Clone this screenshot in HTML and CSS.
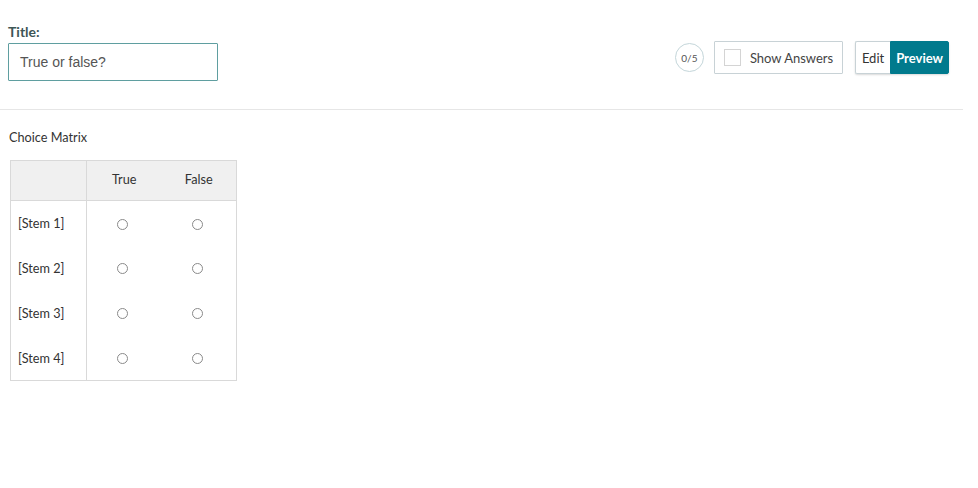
FILE: index.html
```html
<!DOCTYPE html>
<html lang="en">
<head>
    <meta charset="UTF-8">
    <title>Choice Matrix</title>
    <link rel="stylesheet" href="styles.css">
</head>
<body>
    <div class="header">
        <div class="title-block">
            <label class="title-label">Title:</label>
            <div class="title-input">True or false?</div>
        </div>
        <div class="controls">
            <div class="score">0/5</div>
            <div class="show-answers">
                <span class="checkbox"></span>
                <span>Show Answers</span>
            </div>
            <div class="mode-group">
                <span class="mode-btn">Edit</span>
                <span class="mode-btn active">Preview</span>
            </div>
        </div>
    </div>
    <div class="content">
        <div class="question-type">Choice Matrix</div>
        <table class="matrix">
            <thead>
                <tr>
                    <th class="stem-col"></th>
                    <th>True</th>
                    <th>False</th>
                </tr>
            </thead>
            <tbody>
                <tr><td class="stem">[Stem 1]</td><td><span class="radio"></span></td><td><span class="radio"></span></td></tr>
                <tr><td class="stem">[Stem 2]</td><td><span class="radio"></span></td><td><span class="radio"></span></td></tr>
                <tr><td class="stem">[Stem 3]</td><td><span class="radio"></span></td><td><span class="radio"></span></td></tr>
                <tr><td class="stem">[Stem 4]</td><td><span class="radio"></span></td><td><span class="radio"></span></td></tr>
            </tbody>
        </table>
    </div>
</body>
</html>
```

FILE: styles.css
```css
* {
    margin: 0;
    padding: 0;
    box-sizing: border-box;
}

body {
    font-family: Lato, "Open Sans", sans-serif;
    color: #333;
    background: #fff;
}

.header {
    display: flex;
    justify-content: space-between;
    align-items: flex-start;
    padding: 23px 14px 28px 8px;
    border-bottom: 1px solid #e6e6e6;
    margin-right: 15px;
}

.title-label {
    display: block;
    font-size: 14px;
    font-weight: bold;
    color: #3e5656;
    line-height: 18px;
    margin-bottom: 2px;
}

.title-input {
    width: 210px;
    height: 38px;
    border: 1px solid #5f9ea0;
    border-radius: 1px;
    padding: 0 11px;
    display: flex;
    align-items: center;
    font-family: "Liberation Sans", Arial, sans-serif;
    font-size: 14px;
    color: #555;
}

.controls {
    display: flex;
    align-items: center;
    margin-top: 18px;
}

.score {
    width: 29px;
    height: 29px;
    border: 1px solid #c4d6da;
    border-radius: 50%;
    display: flex;
    align-items: center;
    justify-content: center;
    font-size: 10px;
    color: #555;
    margin-right: 10px;
}

.show-answers {
    width: 129px;
    height: 33px;
    border: 1px solid #c8d2d6;
    border-radius: 1px;
    display: flex;
    align-items: center;
    padding-left: 9px;
    font-size: 13px;
    color: #444;
    margin-right: 12px;
}

.checkbox {
    width: 17px;
    height: 17px;
    border: 1px solid #d4d4d4;
    margin-right: 9px;
}

.mode-group {
    display: flex;
    height: 33px;
    box-shadow: 0 1px 2px rgba(0, 0, 0, 0.15);
    border-radius: 2px;
}

.mode-btn {
    display: flex;
    align-items: center;
    font-size: 13px;
    color: #333;
    border: 1px solid #c8d2d6;
    border-right: none;
    border-radius: 2px 0 0 2px;
    padding: 0 6px;
}

.mode-btn.active {
    background: #017a8d;
    color: #fff;
    font-weight: bold;
    border: 1px solid #017a8d;
    border-radius: 0 2px 2px 0;
    padding: 0 5px;
}

.content {
    padding: 19px 10px;
}

.question-type {
    font-size: 12.7px;
    color: #333;
    margin-bottom: 15px;
    margin-left: -1px;
}

.matrix {
    border-collapse: collapse;
    border: 1px solid #d9d9d9;
    font-size: 12.7px;
}

.matrix th {
    background: #f0f0f0;
    font-weight: normal;
    height: 40px;
    width: 75px;
    padding-bottom: 3px;
    border-bottom: 1px solid #d9d9d9;
    text-align: center;
    color: #333;
}

.matrix th.stem-col {
    width: 76px;
}

.matrix td {
    height: 45px;
    text-align: center;
    vertical-align: middle;
}

.matrix td.stem,
.matrix th.stem-col {
    border-right: 1px solid #d9d9d9;
    text-align: left;
    padding-left: 7px;
}

.radio {
    display: inline-block;
    width: 11px;
    height: 11px;
    border: 1px solid #8a8a8a;
    border-radius: 50%;
    vertical-align: middle;
    margin-top: -2px;
    margin-right: 3px;
}
```
